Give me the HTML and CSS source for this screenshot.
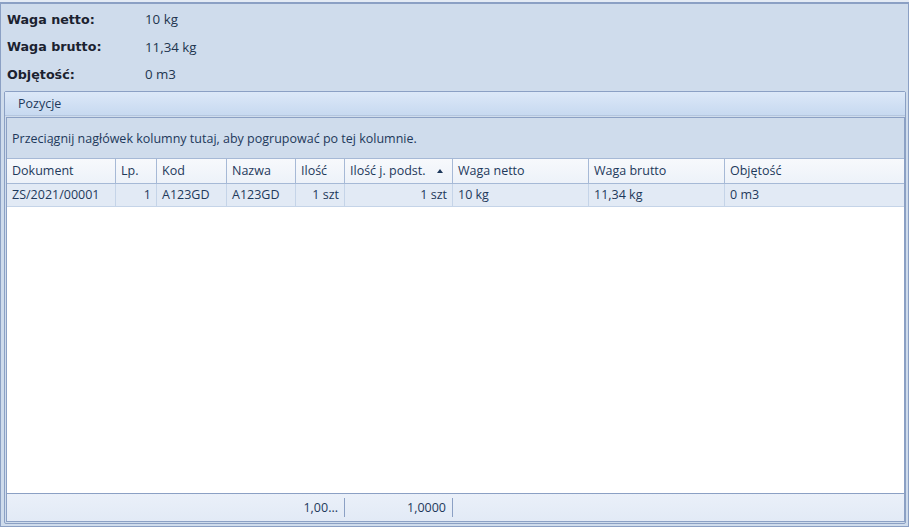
FILE: index.html
```html
<!DOCTYPE html>
<html lang="pl">
<head>
    <meta charset="UTF-8">
    <title>Pozycje</title>
    <link rel="stylesheet" href="styles.css">
</head>
<body>
    <div class="frame">
        <div class="summary">
            <div class="summary-row"><span class="label">Waga netto:</span><span class="value">10 kg</span></div>
            <div class="summary-row"><span class="label">Waga brutto:</span><span class="value">11,34 kg</span></div>
            <div class="summary-row"><span class="label">Objętość:</span><span class="value">0 m3</span></div>
        </div>

        <div class="group">
            <div class="group-title">Pozycje</div>
            <div class="grid">
                <div class="group-panel">Przeciągnij nagłówek kolumny tutaj, aby pogrupować po tej kolumnie.</div>

                <div class="row header-row">
                    <div class="cell">Dokument</div>
                    <div class="cell">Lp.</div>
                    <div class="cell">Kod</div>
                    <div class="cell">Nazwa</div>
                    <div class="cell">Ilość</div>
                    <div class="cell sorted">Ilość j. podst.<span class="sort-arrow"></span></div>
                    <div class="cell">Waga netto</div>
                    <div class="cell">Waga brutto</div>
                    <div class="cell">Objętość</div>
                </div>

                <div class="row data-row">
                    <div class="cell">ZS/2021/00001</div>
                    <div class="cell num">1</div>
                    <div class="cell">A123GD</div>
                    <div class="cell">A123GD</div>
                    <div class="cell num">1 szt</div>
                    <div class="cell num">1 szt</div>
                    <div class="cell">10 kg</div>
                    <div class="cell">11,34 kg</div>
                    <div class="cell">0 m3</div>
                </div>

                <div class="grid-body"></div>

                <div class="footer">
                    <div class="foot-cell foot-wide"></div>
                    <div class="foot-cell num">1,00...</div>
                    <div class="foot-cell num">1,0000</div>
                    <div class="foot-rest"></div>
                </div>
            </div>
        </div>
    </div>
</body>
</html>
```

FILE: styles.css
```css
html, body {
    margin: 0;
    padding: 0;
}
body {
    width: 909px;
    height: 527px;
    background-color: #e4ebf5;
    font-family: "Open Sans", "Noto Sans", sans-serif;
    font-size: 12.5px;
    color: #1e395b;
    overflow: hidden;
}
.frame {
    box-sizing: border-box;
    height: 525px;
    margin-top: 2px;
    border: 1px solid #8ba0c4;
    border-top: 2px solid #8ba0c4;
    background-color: #cfdcec;
    display: flex;
    flex-direction: column;
}

/* summary at the top */
.summary {
    padding: 1.5px 0 0 6px;
}
.summary-row {
    height: 27.5px;
    display: flex;
    align-items: center;
}
.label {
    width: 138px;
    font-family: "DejaVu Sans", sans-serif;
    font-weight: bold;
    font-size: 12.7px;
    color: #1b2230;
}
.value {
    font-size: 13.3px;
    color: #22354f;
}

/* group box */
.group {
    flex: 1;
    margin: 2.5px 2px 2px 3px;
    border: 1px solid #8ba0c4;
    border-radius: 2px;
    display: flex;
    flex-direction: column;
}
.group-title {
    height: 23px;
    line-height: 23px;
    padding-left: 13px;
    background: linear-gradient(#dce8f8, #c7d9f0);
    border-bottom: 1px solid #b4c6df;
}
.grid {
    flex: 1;
    margin: 1px 0 1px 1px;
    border: 1px solid #8ba0c4;
    display: flex;
    flex-direction: column;
    background-color: #fff;
}
.group-panel {
    height: 40px;
    line-height: 41px;
    padding-left: 5px;
    background-color: #cfdcec;
    border-bottom: 1px solid #a6b9d6;
}

/* rows */
.row {
    display: grid;
    grid-template-columns: 109px 41px 70px 69px 49px 108px 136px 136px 1fr;
}
.cell {
    padding: 0 5px;
    border-right: 1px solid #a6b9d6;
    white-space: nowrap;
    overflow: hidden;
}
.cell:last-child {
    border-right: none;
}
.num {
    text-align: right;
}
.header-row {
    height: 24px;
    line-height: 24px;
    background: linear-gradient(#f7f9fc, #edf2f9);
    border-bottom: 1px solid #a6b9d6;
}
.sorted {
    position: relative;
}
.sort-arrow {
    position: absolute;
    right: 9px;
    top: 10px;
    width: 0;
    height: 0;
    border-left: 3px solid transparent;
    border-right: 3px solid transparent;
    border-bottom: 4px solid #1e395b;
}
.data-row {
    height: 22px;
    line-height: 22px;
    background-color: #e2eaf5;
    border-bottom: 1px solid #c5d4e8;
}
.data-row .cell {
    border-right-color: #c5d4e8;
}
.grid-body {
    flex: 1;
    background-color: #fff;
}

/* summary footer */
.footer {
    height: 27px;
    display: flex;
    align-items: center;
    background: linear-gradient(#eaf0f9, #e2eaf6);
    border-top: 1px solid #8ba0c4;
}
.foot-cell {
    height: 19px;
    line-height: 19px;
    padding-right: 6px;
    border-right: 1px solid #8ba0c4;
}
.foot-wide {
    width: 289px;
    border-right: none;
    padding: 0;
}
.footer .foot-cell:nth-child(2) {
    width: 42px;
}
.footer .foot-cell:nth-child(3) {
    width: 101px;
}
.foot-rest {
    flex: 1;
}
```
